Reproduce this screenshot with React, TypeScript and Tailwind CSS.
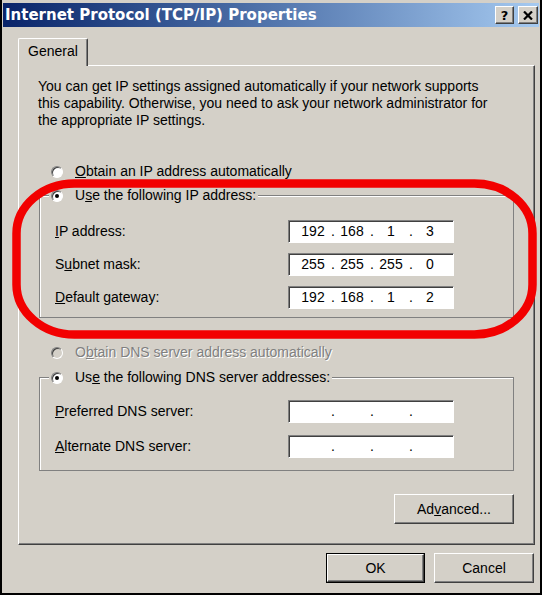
import React from 'react'

const raised =
  'border border-t-white border-l-white border-r-[#404040] border-b-[#404040] shadow-[inset_-1px_-1px_0_#808080] bg-[#d4d0c8]'
const sunken =
  'border border-t-[#808080] border-l-[#808080] border-r-white border-b-white shadow-[inset_1px_1px_0_#404040] bg-white'

function Radio({ checked, disabled }: { checked?: boolean; disabled?: boolean }) {
  return (
    <span
      className={`inline-flex h-[12px] w-[12px] shrink-0 items-center justify-center rounded-full border border-t-[#808080] border-l-[#808080] border-r-white border-b-white shadow-[inset_1px_1px_0_#404040] ${
        disabled ? 'bg-[#d4d0c8]' : 'bg-white'
      }`}
    >
      {checked && <span className="h-[4px] w-[4px] rounded-full bg-black" />}
    </span>
  )
}

function IpField({ octets }: { octets: string[] }) {
  return (
    <div className={`flex h-[23px] w-[166px] items-center pl-[6px] text-black ${sunken}`}>
      {octets.map((o, i) => (
        <React.Fragment key={i}>
          <span className="w-[36px] text-center">{o}</span>
          {i < 3 && <span className="w-[3px] text-center">.</span>}
        </React.Fragment>
      ))}
    </div>
  )
}

function Row({ label, octets }: { label: React.ReactNode; octets: string[] }) {
  return (
    <div className="flex h-[23px] items-center justify-between pl-[15px] pr-[59px]">
      <span>{label}</span>
      <IpField octets={octets} />
    </div>
  )
}

export default function App() {
  return (
    <div className="relative flex h-[595px] w-[542px] flex-col border-x-2 border-b-2 border-black bg-[#d4d0c8] font-['Liberation_Sans',Arial,sans-serif] text-[14px] leading-[17px] text-black">
      {/* title bar */}
      <div className="mx-[1px] mt-[3px] flex h-[24px] items-center justify-between bg-linear-to-r from-[#0a246a] to-[#a6caf0] pl-[2px] pr-[1px]">
        <span className="font-['DejaVu_Sans',Verdana,sans-serif] text-[15px] font-bold text-white">
          Internet Protocol (TCP/IP) Properties
        </span>
        <div className="flex gap-[4px]">
          <div className={`flex h-[18px] w-[19px] items-center justify-center font-['DejaVu_Sans',sans-serif] text-[13px] font-bold leading-none ${raised}`}>
            ?
          </div>
          <div className={`flex h-[18px] w-[20px] items-center justify-center ${raised}`}>
            <svg width="10" height="9" viewBox="0 0 10 9">
              <path d="M1 0.5 L9 8.5 M9 0.5 L1 8.5" stroke="black" strokeWidth="2.2" />
            </svg>
          </div>
        </div>
      </div>

      {/* tab */}
      <div className="ml-[16px] mt-[11px] flex">
        <div className="relative z-10 -mb-px flex h-[28px] w-[70px] items-center justify-center rounded-t-[2px] border-l border-t border-r border-l-white border-t-white border-r-[#404040] bg-[#d4d0c8] pb-[2px] shadow-[inset_-1px_0_0_#808080]">
          General
        </div>
      </div>

      {/* panel */}
      <div className={`ml-[16px] flex h-[480px] w-[517px] flex-col px-[20px] ${raised}`}>
        <p className="-ml-px mt-[12px]">
          You can get IP settings assigned automatically if your network supports
          <br />
          this capability. Otherwise, you need to ask your network administrator for
          <br />
          the appropriate IP settings.
        </p>

        <div className="ml-[12px] mt-[34px] flex h-[17px] items-center gap-[12px]">
          <Radio />
          <span>
            <span className="underline">O</span>btain an IP address automatically
          </span>
        </div>

        <fieldset className="mt-[7px] border border-[#808080] p-0 pb-[8px] shadow-[inset_1px_1px_0_#fff]">
          <legend className="ml-[9px] bg-[#d4d0c8] px-[2px]">
            <span className="flex h-[17px] items-center gap-[12px]">
              <Radio checked />
              <span>
                U<span className="underline">s</span>e the following IP address:
              </span>
            </span>
          </legend>
          <div className="mt-[16px] flex flex-col gap-[10px]">
            <Row
              label={
                <>
                  <span className="underline">I</span>P address:
                </>
              }
              octets={['192', '168', '1', '3']}
            />
            <Row
              label={
                <>
                  S<span className="underline">u</span>bnet mask:
                </>
              }
              octets={['255', '255', '255', '0']}
            />
            <Row
              label={
                <>
                  <span className="underline">D</span>efault gateway:
                </>
              }
              octets={['192', '168', '1', '2']}
            />
          </div>
        </fieldset>

        <div className="ml-[12px] mt-[26px] flex h-[17px] items-center gap-[12px]">
          <Radio disabled />
          <span className="text-[#808080] [text-shadow:1px_1px_0_#fff]">
            O<span className="underline">b</span>tain DNS server address automatically
          </span>
        </div>

        <fieldset className="mt-[8px] border border-[#808080] p-0 pb-[12px] shadow-[inset_1px_1px_0_#fff]">
          <legend className="ml-[9px] bg-[#d4d0c8] px-[2px]">
            <span className="flex h-[17px] items-center gap-[12px]">
              <Radio checked />
              <span>
                Us<span className="underline">e</span> the following DNS server addresses:
              </span>
            </span>
          </legend>
          <div className="mt-[14px] flex flex-col gap-[12px]">
            <Row
              label={
                <>
                  <span className="underline">P</span>referred DNS server:
                </>
              }
              octets={['', '', '', '']}
            />
            <Row
              label={
                <>
                  <span className="underline">A</span>lternate DNS server:
                </>
              }
              octets={['', '', '', '']}
            />
          </div>
        </fieldset>

        <div className="mt-[23px] flex justify-end">
          <div className={`flex h-[30px] w-[120px] items-center justify-center ${raised}`}>
            <span>
              Ad<span className="underline">v</span>anced...
            </span>
          </div>
        </div>
      </div>

      {/* dialog buttons */}
      <div className="mt-[8px] flex justify-end gap-[9px] pr-[6px]">
        <div className="h-[30px] w-[99px] border border-black">
          <div className={`flex h-full w-full items-center justify-center ${raised}`}>OK</div>
        </div>
        <div className={`flex h-[30px] w-[100px] items-center justify-center ${raised}`}>Cancel</div>
      </div>

      {/* red highlight drawn over the IP group */}
      <svg
        className="pointer-events-none absolute left-[10px] top-[179px]"
        width="525"
        height="160"
        viewBox="0 0 525 160"
      >
        <rect
          x="4.5"
          y="4.5"
          width="516"
          height="151"
          rx="58"
          ry="50"
          fill="none"
          stroke="#f20000"
          strokeWidth="8.5"
        />
      </svg>
    </div>
  )
}
